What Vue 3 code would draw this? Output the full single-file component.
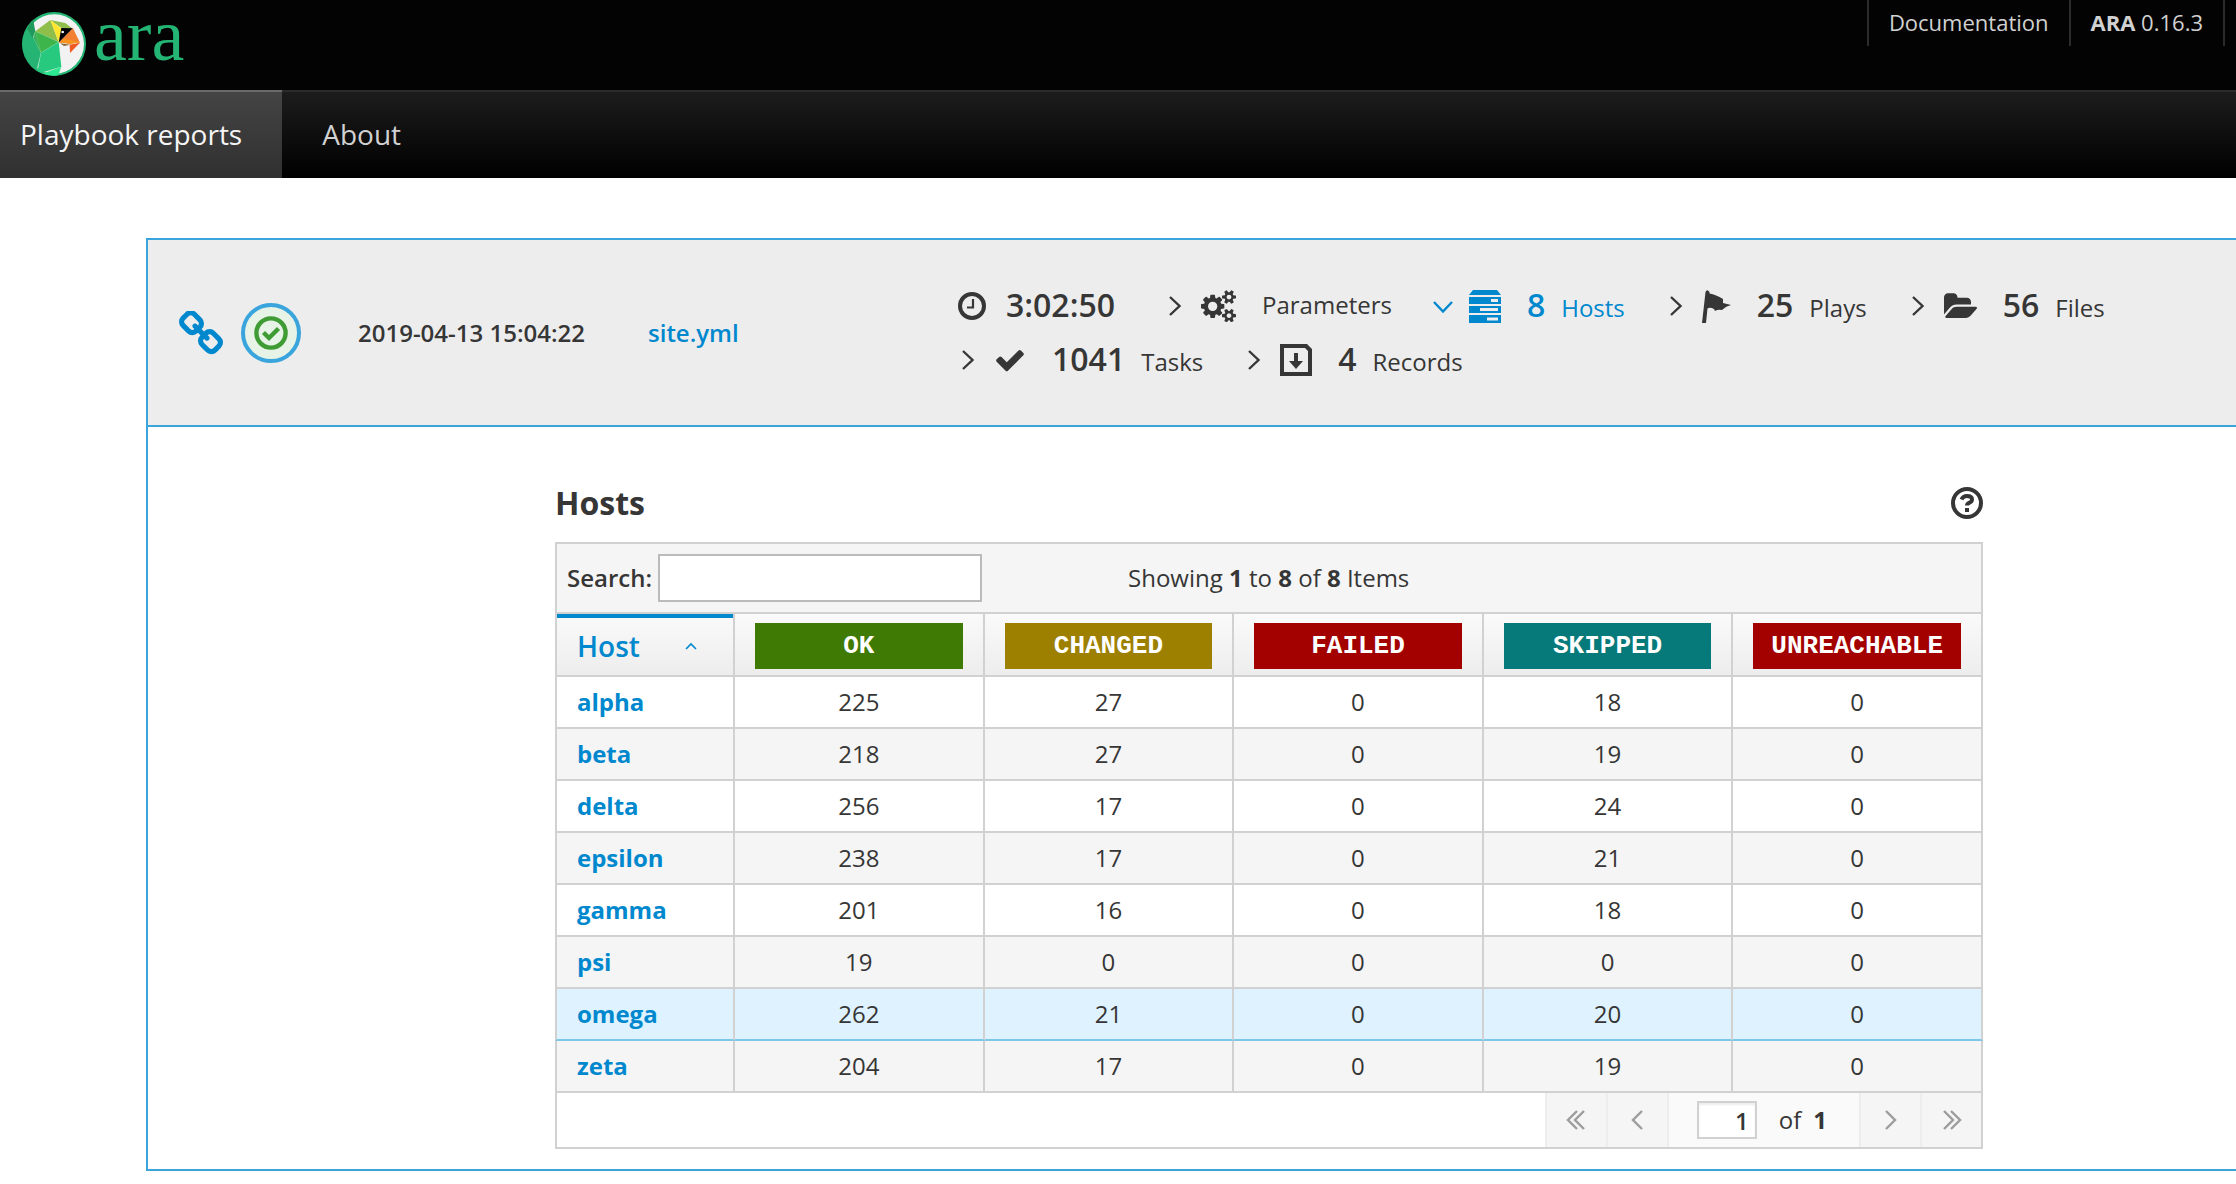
<script setup>
import { ref, computed } from 'vue'

const search = ref('')
const page = ref('1')

const statuses = [
  { key: 'ok', label: 'OK' },
  { key: 'changed', label: 'CHANGED' },
  { key: 'failed', label: 'FAILED' },
  { key: 'skipped', label: 'SKIPPED' },
  { key: 'unreachable', label: 'UNREACHABLE' },
]

const hosts = [
  { name: 'alpha', ok: 225, changed: 27, failed: 0, skipped: 18, unreachable: 0 },
  { name: 'beta', ok: 218, changed: 27, failed: 0, skipped: 19, unreachable: 0 },
  { name: 'delta', ok: 256, changed: 17, failed: 0, skipped: 24, unreachable: 0 },
  { name: 'epsilon', ok: 238, changed: 17, failed: 0, skipped: 21, unreachable: 0 },
  { name: 'gamma', ok: 201, changed: 16, failed: 0, skipped: 18, unreachable: 0 },
  { name: 'psi', ok: 19, changed: 0, failed: 0, skipped: 0, unreachable: 0 },
  { name: 'omega', ok: 262, changed: 21, failed: 0, skipped: 20, unreachable: 0, active: true },
  { name: 'zeta', ok: 204, changed: 17, failed: 0, skipped: 19, unreachable: 0 },
]

const shown = computed(() => hosts.filter((h) => h.name.includes(search.value.trim())))
</script>

<template>
  <div class="page">
    <header>
      <div class="topbar">
        <a href="#" class="brand">
          <svg class="bird" viewBox="0 0 192 192" aria-hidden="true">
            <defs>
              <clipPath id="disc"><circle cx="96" cy="96" r="95" /></clipPath>
            </defs>
            <circle cx="96" cy="96" r="96" fill="#23b573" />
            <circle cx="97" cy="96" r="89" fill="#f2f2f2" />
            <g clip-path="url(#disc)">
              <path d="M0 30 15 50 34 76 57 122 45 172 60 192H0z" fill="#25b473" />
              <path d="M33 22 40 58 32 78 15 50z" fill="#1f9a5c" />
              <path d="M85 24 40 58 110 90z" fill="#8fbf4a" />
              <path d="M85 24 130 33 152 50 118 48z" fill="#8fbf4a" />
              <path d="M40 58 110 90 57 122 36 74z" fill="#3db54a" />
              <path d="M40 58 57 122 34 78z" fill="#39b060" stroke="#7fd07a" stroke-width="1" />
              <path d="M85 24 119 50 110 90z" fill="#ffe52e" />
              <path d="M118 48 153 49 110 92z" fill="#000" />
              <circle cx="122" cy="60" r="4" fill="#fff" />
              <path d="M153 49 174 92 110 92z" fill="#f18033" />
              <path d="M126 80 174 90 145 97 112 91z" fill="#f7931e" />
              <path d="M114 94 145 98 126 102z" fill="#8a6239" />
              <path d="M143 98 174 92 144 123z" fill="#f15a24" />
              <path d="M57 122 110 90 118 164 45 186z" fill="#27c97f" />
              <path d="M118 164 108 192H50L58 186z" fill="#2ee891" />
              <path d="M57 122 45 172M57 122 110 90M57 186 118 164M40 58 110 90" stroke="#7fdca8" stroke-width="1" fill="none" />
            </g>
          </svg>
          <span class="wordmark">ara</span>
        </a>
        <ul class="utility">
          <li><a href="#">Documentation</a></li>
          <li><a href="#"><b>ARA</b> 0.16.3</a></li>
        </ul>
      </div>
      <nav class="tabs">
        <a href="#" class="tab current">Playbook reports</a>
        <a href="#" class="tab">About</a>
      </nav>
    </header>

    <main class="panel">
      <section class="summary">
        <div class="status">
          <a href="#" aria-label="Permalink">
            <svg class="chain" viewBox="80 48 1632 1632" fill="currentColor"><path d="M1520 1216q0-40-28-68l-208-208q-28-28-68-28-42 0-72 32 3 3 19 18.500t21.500 21.500 15 19 13 25.500 3.500 27.500q0 40-28 68t-68 28q-15 0-27.500-3.500t-25.500-13-19-15-21.500-21.500-18.500-19q-33 31-33 73 0 40 28 68l206 207q27 27 68 27 40 0 68-26l147-146q28-28 28-67zm-703-705q0-40-28-68l-206-207q-28-28-68-28-39 0-68 27l-147 146q-28 28-28 67 0 40 28 68l208 208q27 27 68 27 42 0 72-31-3-3-19-18.500t-21.500-21.500-15-19-13-25.500-3.500-27.500q0-40 28-68t68-28q15 0 27.500 3.500t25.500 13 19 15 21.500 21.500 18.500 19q33-31 33-73zm895 705q0 120-85 203l-147 146q-83 83-203 83-121 0-204-85l-206-207q-83-83-83-203 0-123 88-209l-88-88q-86 88-208 88-120 0-204-84l-208-208q-84-84-84-204t85-203l147-146q83-83 203-83 121 0 204 85l206 207q83 83 83 203 0 123-88 209l88 88q86-88 208-88 120 0 204 84l208 208q84 84 84 204z" /></svg>
          </a>
          <span class="badge-ok">
            <svg viewBox="0 0 34 34" fill="none" stroke="currentColor"><circle cx="17" cy="17" r="14.600" stroke-width="4.400" /><path d="M9.500 16.500 15 22l9.500-9.500" stroke-width="4.400" /></svg>
          </span>
        </div>
        <div class="date">2019-04-13 15:04:22</div>
        <div class="file"><a href="#">site.yml</a></div>

        <div class="stats">
          <span class="stat duration">
            <svg class="w28" viewBox="0 0 28 28" fill="none" stroke="currentColor"><circle cx="14" cy="14" r="12" stroke-width="4" /><path d="M15 7v8.500H9" stroke-width="2.200" /></svg>
            <strong>3:02:50</strong>
          </span>
          <button type="button" class="stat">
            <svg class="angle" viewBox="0 0 20 20"><path d="m5 1 9.500 9L5 19" /></svg>
            <svg class="w35" viewBox="0 0 1920 1792" fill="currentColor"><path d="M896 896q0-106-75-181t-181-75-181 75-75 181 75 181 181 75 181-75 75-181zm768 512q0-52-38-90t-90-38-90 38-38 90q0 53 37.500 90.500t90.500 37.500 90.500-37.500 37.500-90.500zm0-1024q0-52-38-90t-90-38-90 38-38 90q0 53 37.500 90.500t90.500 37.500 90.500-37.500 37.500-90.500zm-384 421v185q0 10-7 19.500t-16 10.500l-155 24q-11 35-32 76 34 48 90 115 7 11 7 20 0 12-7 19-23 30-82.500 89.500t-78.500 59.500q-11 0-21-7l-115-90q-37 19-77 31-11 108-23 155-7 24-30 24h-186q-11 0-20-7.500t-10-17.500l-23-153q-34-10-75-31l-118 89q-7 7-20 7-11 0-21-8-144-133-144-160 0-9 7-19 10-14 41-53t47-61q-23-44-35-82l-152-24q-10-1-17-9.500t-7-19.500v-185q0-10 7-19.500t16-10.500l155-24q11-35 32-76-34-48-90-115-7-11-7-20 0-12 7-20 22-30 82-89t79-59q11 0 21 7l115 90q34-18 77-32 11-108 23-154 7-24 30-24h186q11 0 20 7.500t10 17.500l23 153q34 10 75 31l118-89q8-7 20-7 11 0 21 8 144 133 144 160 0 8-7 19-12 16-42 54t-45 60q23 48 34 82l152 23q10 2 17 10.500t7 19.500zm640 533v140q0 16-149 31-12 27-30 52 51 113 51 138 0 4-4 7-122 71-124 71-8 0-46-47t-52-68q-20 2-30 2t-30-2q-14 21-52 68t-46 47q-2 0-124-71-4-3-4-7 0-25 51-138-18-25-30-52-149-15-149-31v-140q0-16 149-31 13-29 30-52-51-113-51-138 0-4 4-7 4-2 35-20t59-34 30-16q8 0 46 46.500t52 67.500q20-2 30-2t30 2q51-71 92-112l6-2q4 0 124 70 4 3 4 7 0 25-51 138 17 23 30 52 149 15 149 31zm0-1024v140q0 16-149 31-12 27-30 52 51 113 51 138 0 4-4 7-122 71-124 71-8 0-46-47t-52-68q-20 2-30 2t-30-2q-14 21-52 68t-46 47q-2 0-124-71-4-3-4-7 0-25 51-138-18-25-30-52-149-15-149-31v-140q0-16 149-31 13-29 30-52-51-113-51-138 0-4 4-7 4-2 35-20t59-34 30-16q8 0 46 46.500t52 67.500q20-2 30-2t30 2q51-71 92-112l6-2q4 0 124 70 4 3 4 7 0 25-51 138 17 23 30 52 149 15 149 31z" /></svg>
            <span>Parameters</span>
          </button>
          <button type="button" class="stat open">
            <svg class="angle" viewBox="0 0 20 20"><path d="m1 6 9 9.500L19 6" /></svg>
            <svg class="w32" viewBox="0 0 32 33" fill="currentColor" fill-rule="evenodd"><path d="M4 0h24l4 5H0zM0 7h32v7H0zM22 9v3h7V9zM0 16h32v7H0zM11 18v3h18v-3zM0 25h32v8H0zM18 27.500v3h11v-3z" /></svg>
            <strong>8</strong><span>Hosts</span>
          </button>
          <button type="button" class="stat">
            <svg class="angle" viewBox="0 0 20 20"><path d="m5 1 9.500 9L5 19" /></svg>
            <svg class="w29" viewBox="0 0 29 33" fill="currentColor"><path d="M3.500 2Q5-1.500 7.500 2v1.500Q14 4.500 21 9v4l8 2q-5 1-9 5-4-1-7 1l-1-2q-4-2-6.500-.5L4 33H0z" /></svg>
            <strong>25</strong><span>Plays</span>
          </button>
          <button type="button" class="stat">
            <svg class="angle" viewBox="0 0 20 20"><path d="m5 1 9.500 9L5 19" /></svg>
            <svg class="w33" viewBox="0 0 1879 1664" fill="currentColor"><path d="M1879 952q0 31-31 66l-336 396q-43 51-120.500 86.500t-143.500 35.500h-1088q-34 0-60.500-13t-26.500-43q0-31 31-66l336-396q43-51 120.500-86.500t143.500-35.500h1088q34 0 60.500 13t26.500 43zm-343-344v160h-832q-94 0-197 47.500t-164 119.500l-337 396-5 6q0-4-.5-12.500t-.5-12.500v-960q0-92 66-158t158-66h320q92 0 158 66t66 158v32h544q92 0 158 66t66 158z" /></svg>
            <strong>56</strong><span>Files</span>
          </button>
          <button type="button" class="stat">
            <svg class="angle" viewBox="0 0 20 20"><path d="m5 1 9.500 9L5 19" /></svg>
            <svg class="w32" viewBox="0 0 1792 1792" fill="currentColor"><path d="M1671 566q0 40-28 68l-724 724-136 136q-28 28-68 28t-68-28l-136-136-362-362q-28-28-28-68t28-68l136-136q28-28 68-28t68 28l294 295 656-657q28-28 68-28t68 28l136 136q28 28 28 68z" /></svg>
            <strong>1041</strong><span>Tasks</span>
          </button>
          <button type="button" class="stat">
            <svg class="angle" viewBox="0 0 20 20"><path d="m5 1 9.500 9L5 19" /></svg>
            <svg class="w32" viewBox="0 0 32 32" fill="currentColor" fill-rule="evenodd"><path d="M0 0h27l5 5v27H0zM4 4v24h24V7l-3-3zM14 9h4v8h5l-7 8-7-8h5z" /></svg>
            <strong>4</strong><span>Records</span>
          </button>
        </div>
      </section>

      <section class="detail">
        <div class="heading">
          <h2>Hosts</h2>
          <button type="button" class="help" aria-label="Help">
            <svg viewBox="0 0 32 32" fill="none" stroke="currentColor"><circle cx="16" cy="16" r="14" stroke-width="4" /><path d="M10.500 12.500Q12 9 16 9q5 0 5 3.500 0 2-2.500 3.200-2.500 1.100-2.500 2.800" stroke-width="4" /><path d="M14 21h4v4h-4z" fill="currentColor" stroke="none" /></svg>
          </button>
        </div>

        <div class="toolbar">
          <label for="host-search">Search:</label>
          <input id="host-search" v-model="search" type="text" />
          <div class="showing">Showing <b>1</b> to <b>8</b> of <b>8</b> Items</div>
        </div>

        <table>
          <thead>
            <tr>
              <th class="host-col" scope="col">
                <div class="sort">Host
                  <svg viewBox="0 0 12 8" fill="none" stroke="currentColor" stroke-width="1.600"><path d="m1 7 5-5 5 5" /></svg>
                </div>
              </th>
              <th v-for="s in statuses" :key="s.key" scope="col"><span class="pill" :class="s.key">{{ s.label }}</span></th>
            </tr>
          </thead>
          <tbody>
            <tr v-for="h in shown" :key="h.name" :class="{ active: h.active }">
              <td class="name"><a href="#">{{ h.name }}</a></td>
              <td v-for="s in statuses" :key="s.key">{{ h[s.key] }}</td>
            </tr>
          </tbody>
        </table>

        <div class="pager">
          <button type="button" aria-label="First page"><svg viewBox="0 0 20 20"><path d="m11 1-9 9 9 9M18 1l-9 9 9 9" /></svg></button>
          <button type="button" aria-label="Previous page"><svg viewBox="0 0 20 20"><path d="m15 1-9 9 9 9" /></svg></button>
          <div class="pages">
            <input v-model="page" type="text" aria-label="Current page" />
            <span>of</span><b>1</b>
          </div>
          <button type="button" aria-label="Next page"><svg viewBox="0 0 20 20"><path d="m5 1 9 9-9 9" /></svg></button>
          <button type="button" aria-label="Last page"><svg viewBox="0 0 20 20"><path d="m2 1 9 9-9 9M9 1l9 9-9 9" /></svg></button>
        </div>
      </section>
    </main>
  </div>
</template>

<style>
body {
  background: #fff;
}
</style>

<style scoped>
.page {
  font-family: "Open Sans", "Noto Sans", sans-serif;
  font-size: 24px;
  color: #363636;
}
a {
  color: #0088ce;
  text-decoration: none;
}
button,
input {
  font: inherit;
  color: inherit;
  box-sizing: border-box;
}
button {
  background: none;
  border: 0;
  padding: 0;
}
svg {
  display: block;
}

.topbar {
  display: flex;
  justify-content: space-between;
  align-items: flex-start;
  height: 90px;
  background: #030303;
}
.brand {
  display: flex;
  gap: 8px;
  padding: 12px 0 0 22px;
  color: #24b574;
}
.bird {
  width: 64px;
  height: 64px;
}
.wordmark {
  font-family: "Liberation Serif", serif;
  font-size: 74px;
  line-height: 46px;
}
.utility {
  display: flex;
  list-style: none;
  margin: 0 11px 0 0;
  padding: 0;
  border-right: 2px solid #2b2b2b;
}
.utility a {
  display: block;
  padding: 0 20px 2px;
  border-left: 2px solid #2b2b2b;
  font-size: 22px;
  line-height: 44px;
  color: #d1d1d1;
}
.tabs {
  display: flex;
  background: linear-gradient(#1d1d1d, #000);
}
.tab {
  padding: 0 40px 2px;
  border-top: 2px solid #2b2b2b;
  font-size: 28px;
  line-height: 84px;
  color: #d1d1d1;
}
.tab.current {
  padding-left: 20px;
  border-top-color: #6a6a6a;
  background: linear-gradient(#444, #303030);
  color: #f5f5f5;
}
.tabs::after {
  content: "";
  flex: 1;
  border-top: 2px solid #2b2b2b;
}

.panel {
  margin: 60px 0 12px 146px;
  border: 2px solid #39a5dc;
  border-right: 0;
}
.summary {
  display: grid;
  grid-template-columns: 179px 290px 310px 1fr;
  align-items: center;
  padding: 36px 0 36px 31px;
  background: #ededed;
  border-bottom: 2px solid #39a5dc;
}
.status {
  display: flex;
  align-items: center;
  gap: 18px;
}
.chain {
  width: 44px;
  height: 44px;
}
.badge-ok {
  display: flex;
  align-items: center;
  justify-content: center;
  box-sizing: border-box;
  width: 60px;
  height: 60px;
  border: 4px solid #39a5dc;
  border-radius: 50%;
  background: #e6f3e6;
  color: #3f9c35;
}
.badge-ok svg {
  width: 34px;
}
.date,
.file {
  font-weight: 600;
}
.stats {
  display: flex;
  flex-wrap: wrap;
  column-gap: 41px;
  padding: 3px 0 2px;
}
.stat {
  display: flex;
  align-items: baseline;
  height: 54px;
  line-height: 52px;
  white-space: nowrap;
}
.stat svg {
  align-self: center;
  flex: none;
}
.stat strong {
  font-size: 32px;
  font-weight: 600;
  margin-right: 16px;
}
.stat svg:not(.angle) {
  margin-right: 26px;
}
.stat.open {
  color: #0088ce;
}
.stat.duration svg {
  margin-right: 20px;
}
.stat.duration strong {
  margin-right: 9px;
}
.angle {
  width: 20px;
  margin-right: 16px;
  fill: none;
  stroke: currentColor;
  stroke-width: 2.4;
}
.w28 { width: 28px; }
.w29 { width: 29px; }
.w32 { width: 32px; }
.w33 { width: 33px; }
.w35 { width: 35px; }

.detail {
  padding: 56px 253px 20px 407px;
}
.heading {
  display: flex;
  align-items: center;
  justify-content: space-between;
  height: 40px;
  padding-bottom: 19px;
}
h2 {
  margin: 0;
  font-size: 32px;
  line-height: 40px;
}
.help svg {
  width: 32px;
  height: 32px;
}
.toolbar {
  display: grid;
  grid-template-columns: auto 324px 1fr;
  align-items: center;
  padding: 10px;
  border: 2px solid #d1d1d1;
  background: #f5f5f5;
}
.toolbar label {
  font-weight: 600;
  padding: 0 6px 2px 0;
}
.toolbar input {
  height: 48px;
  padding: 0 10px;
  border: 2px solid #bbb;
  background: #fff;
}
.showing {
  padding: 0 0 2px 146px;
}

table {
  width: 100%;
  table-layout: fixed;
  border-collapse: separate;
  border-spacing: 0;
}
th,
td {
  padding: 0 20px;
  border-right: 2px solid #d1d1d1;
  border-bottom: 2px solid #d1d1d1;
  text-align: center;
}
th:first-child,
td:first-child {
  border-left: 2px solid #d1d1d1;
  text-align: left;
}
th {
  height: 58px;
  padding-top: 3px;
  background: linear-gradient(#fafafa, #ededed);
}
.host-col {
  width: 136px;
  box-shadow: inset 0 4px #0088ce;
}
.sort {
  display: flex;
  align-items: center;
  justify-content: space-between;
  padding-right: 16px;
  font-size: 28px;
  font-weight: 600;
  color: #0088ce;
}
.sort svg {
  width: 12px;
}
.pill {
  display: block;
  font-family: "Liberation Mono", monospace;
  font-size: 26px;
  font-weight: 700;
  line-height: 46px;
  color: #fff;
}
.ok { background: #3f7b04; }
.changed { background: #9e8000; }
.failed,
.unreachable { background: #a30000; }
.skipped { background: #067a7a; }
td {
  height: 48px;
  padding-bottom: 2px;
}
tbody tr:nth-child(even) {
  background: #f5f5f5;
}
tbody tr.active {
  background: #def3ff;
}
.active td {
  border-bottom-color: #7dc8e8;
}
.name {
  font-weight: 700;
}

.pager {
  display: flex;
  justify-content: flex-end;
  height: 54px;
  border: 2px solid #d1d1d1;
  border-top: 0;
}
.pager button {
  display: flex;
  align-items: center;
  justify-content: center;
  width: 61px;
  border-left: 2px solid #ededed;
  background: #f5f5f5;
}
.pager svg {
  width: 20px;
  fill: none;
  stroke: #9c9c9c;
  stroke-width: 2.4;
}
.pages {
  display: flex;
  align-items: center;
  padding: 0 32px 0 28px;
  border-left: 2px solid #ededed;
  background: #fafafa;
}
.pages input {
  width: 60px;
  height: 38px;
  padding: 0 6px;
  border: 2px solid #d1d1d1;
  background: #fff;
  box-shadow: inset 0 2px 2px rgba(3, 3, 3, 0.08);
  font-weight: 600;
  text-align: right;
}
.pages span {
  margin: 0 12px 0 22px;
}
.pages span,
.pages b {
  padding-bottom: 2px;
}
</style>
